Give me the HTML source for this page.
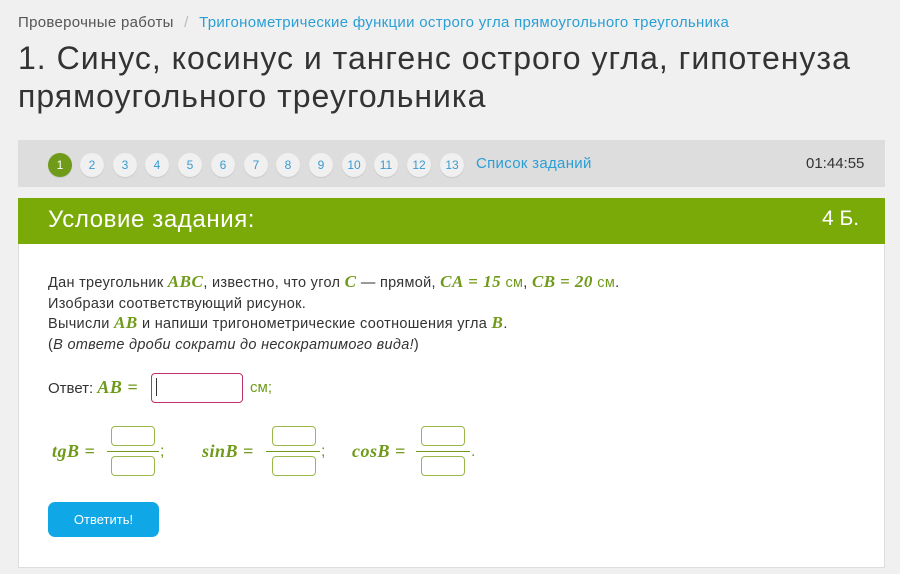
<!DOCTYPE html>
<html><head><meta charset="utf-8"><style>
body{margin:0;width:900px;height:574px;background:#f0f0f0;font-family:"Liberation Sans","DejaVu Sans",sans-serif;color:#333;position:relative;overflow:hidden}
.a{position:absolute}
.m{font-family:"Liberation Serif",serif;font-style:italic;font-weight:bold;color:#6f9a1a;font-size:17px;letter-spacing:0.5px;line-height:1}
.c{display:inline-block;width:24px;height:24px;border-radius:50%;background:#f0f0f0;color:#3a9bd0;font-size:12px;text-align:center;line-height:24px;position:absolute;top:153px;box-shadow:0 1px 1px #c8c8c8}
.box{position:absolute;width:42px;height:18px;border:1.5px solid #9ab84a;border-radius:4px;background:#fff}
.ln{position:absolute;height:1px;background:#6f9a1a}
</style></head><body>
<div class="a" style="left:18px;top:14px;font-size:15px;color:#555;letter-spacing:0.3px">Проверочные работы <span style="color:#bbb;margin:0 6px">/</span> <span style="color:#2a9fd6">Тригонометрические функции острого угла прямоугольного треугольника</span></div>
<div class="a" style="left:18px;top:39px;font-size:32px;line-height:38px;color:#333;letter-spacing:1px">1. Синус, косинус и тангенс острого угла, гипотенуза<br>прямоугольного треугольника</div>
<div class="a" style="left:18px;top:140px;width:867px;height:47px;background:#dddddd"></div>
<div class="c" style="left:48px;background:#6f9a1a;color:#fff">1</div>
<div class="c" style="left:80px">2</div><div class="c" style="left:113px">3</div><div class="c" style="left:145px">4</div><div class="c" style="left:178px">5</div><div class="c" style="left:211px">6</div><div class="c" style="left:244px">7</div><div class="c" style="left:276px">8</div><div class="c" style="left:309px">9</div><div class="c" style="left:342px">10</div><div class="c" style="left:374px">11</div><div class="c" style="left:407px">12</div><div class="c" style="left:440px">13</div>
<div class="a" style="left:476px;top:155px;font-size:15px;color:#2a9fd6;letter-spacing:0.3px">Список заданий</div>
<div class="a" style="left:806px;top:155px;font-size:15px;color:#333">01:44:55</div>
<div class="a" style="left:18px;top:198px;width:865px;height:368px;background:#fff;border:1px solid #ddd"></div>
<div class="a" style="left:18px;top:198px;width:867px;height:46px;background:#79aa08"></div>
<div class="a" style="left:48px;top:206px;font-size:24px;color:#fff;letter-spacing:0.6px">Условие задания:</div>
<div class="a" style="left:822px;top:207px;font-size:21px;color:#fff">4 Б.</div>
<div class="a" style="left:48px;top:273px;font-size:14.5px;line-height:20.5px;color:#333;letter-spacing:0.3px">Дан треугольник <span class="m">ABC</span>, известно, что угол <span class="m">C</span> — прямой, <span class="m">CA</span> <span class="m">= 15</span> <span style="color:#6f9a1a">см</span>, <span class="m">CB</span> <span class="m">= 20</span> <span style="color:#6f9a1a">см</span>.<br>Изобрази соответствующий рисунок.<br>Вычисли <span class="m">AB</span> и напиши тригонометрические соотношения угла <span class="m">B</span>.<br>(<i>В ответе дроби сократи до несократимого вида!</i>)</div>
<div class="a" style="left:48px;top:378px;font-size:15px">Ответ: <span class="m" style="font-size:18px">AB =</span></div>
<div class="a" style="left:151px;top:373px;width:90px;height:28px;border:1.5px solid #c0306a;border-radius:4px"></div>
<div class="a" style="left:156px;top:378px;width:1px;height:18px;background:#333"></div>
<div class="a" style="left:250px;top:379px;font-size:15px;color:#6f9a1a">см;</div>
<div class="a m" style="left:52px;top:442px;font-size:18px">tgB =</div>
<div class="box" style="left:111px;top:426px"></div><div class="ln" style="left:107px;top:451px;width:52px"></div><div class="box" style="left:111px;top:456px"></div>
<div class="a" style="left:160px;top:443px;color:#6f9a1a">;</div>
<div class="a m" style="left:202px;top:442px;font-size:18px">sinB =</div>
<div class="box" style="left:272px;top:426px"></div><div class="ln" style="left:266px;top:451px;width:54px"></div><div class="box" style="left:272px;top:456px"></div>
<div class="a" style="left:321px;top:443px;color:#6f9a1a">;</div>
<div class="a m" style="left:352px;top:442px;font-size:18px">cosB =</div>
<div class="box" style="left:421px;top:426px"></div><div class="ln" style="left:416px;top:451px;width:54px"></div><div class="box" style="left:421px;top:456px"></div>
<div class="a" style="left:471px;top:443px;color:#6f9a1a">.</div>
<div class="a" style="left:48px;top:502px;width:111px;height:35px;background:#0fa7e6;border-radius:7px;color:#fff;font-size:13px;text-align:center;line-height:35px">Ответить!</div>
</body></html>
